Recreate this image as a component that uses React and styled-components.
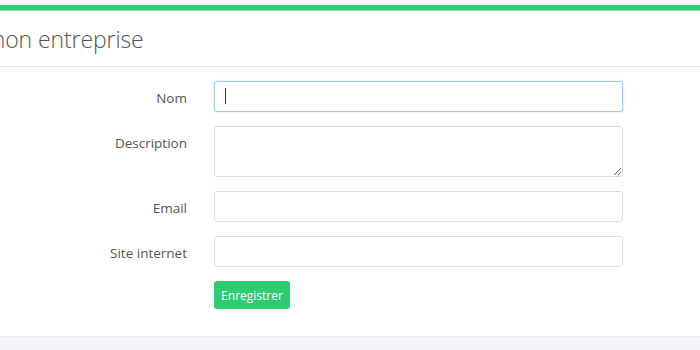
import React from 'react';
import styled, { createGlobalStyle } from 'styled-components';

const GlobalStyle = createGlobalStyle`
  html, body {
    margin: 0;
    padding: 0;
    background: #f3f5f8;
    overflow: hidden;
  }
  body {
    font-family: 'Open Sans', 'Noto Sans', sans-serif;
    color: #555;
  }
`;

const Page = styled.div`
  padding-top: 5px;
  height: 350px;
  box-sizing: border-box;
`;

const Card = styled.section`
  margin-left: -126px;
  margin-right: -20px;
  background: #fff;
  border-top: 5px solid #2ecc71;
  box-shadow: 0 1px 2px rgba(0, 0, 0, 0.06);
  &::before {
    content: '';
    display: block;
    height: 1px;
    background: #8fe0b0;
  }
`;

const Header = styled.header`
  height: 55px;
  display: flex;
  align-items: center;
  padding-left: 20px;
  border-bottom: 1px solid #dfe7ee;
`;

const Title = styled.h1`
  margin: 0;
  font-size: 23px;
  font-weight: 300;
  color: #555;
  letter-spacing: -0.1px;
`;

const Form = styled.form`
  display: grid;
  grid-template-columns: 313px 409px;
  column-gap: 27px;
  row-gap: 14px;
  padding: 14px 0 27px;
`;

const Label = styled.label`
  box-sizing: border-box;
  height: 31px;
  padding-top: 2px;
  text-align: right;
  font-size: 13.5px;
  line-height: 31px;
  color: #555;
`;

const Field = styled.div`
  position: relative;
`;

const Input = styled.input`
  display: block;
  box-sizing: border-box;
  width: 100%;
  height: 31px;
  border: 1px solid ${(p) => (p.$focused ? '#9fcdf0' : '#dcdcdc')};
  border-radius: 3px;
  box-shadow: ${(p) => (p.$focused ? '0 0 2px rgba(102, 175, 233, 0.5)' : 'none')};
  outline: none;
  padding: 0 10px;
  font-family: inherit;
  font-size: 13px;
  background: #fff;
`;

const TextArea = styled.textarea`
  display: block;
  box-sizing: border-box;
  width: 100%;
  height: 51px;
  border: 1px solid #dcdcdc;
  border-radius: 3px;
  outline: none;
  padding: 6px 10px;
  font-family: inherit;
  font-size: 13px;
  resize: vertical;
`;

const Caret = styled.span`
  position: absolute;
  left: 11px;
  top: 7px;
  width: 1px;
  height: 16px;
  background: #333;
`;

const Button = styled.button`
  grid-column: 2;
  justify-self: start;
  height: 28px;
  width: 76px;
  border: none;
  border-radius: 3px;
  background: #2ecc71;
  color: #fff;
  font-family: inherit;
  font-size: 12px;
  cursor: pointer;
`;

const App = () => {
  return (
    <Page>
      <GlobalStyle />
      <Card>
        <Header>
          <Title>Modifier mon entreprise</Title>
        </Header>
        <Form onSubmit={(e) => e.preventDefault()}>
          <Label htmlFor="nom">Nom</Label>
          <Field>
            <Input id="nom" $focused />
            <Caret />
          </Field>

          <Label htmlFor="description">Description</Label>
          <Field>
            <TextArea id="description" />
          </Field>

          <Label htmlFor="email">Email</Label>
          <Field>
            <Input id="email" type="email" />
          </Field>

          <Label htmlFor="site">Site internet</Label>
          <Field>
            <Input id="site" />
          </Field>

          <Button type="submit">Enregistrer</Button>
        </Form>
      </Card>
    </Page>
  );
};

export default App;
